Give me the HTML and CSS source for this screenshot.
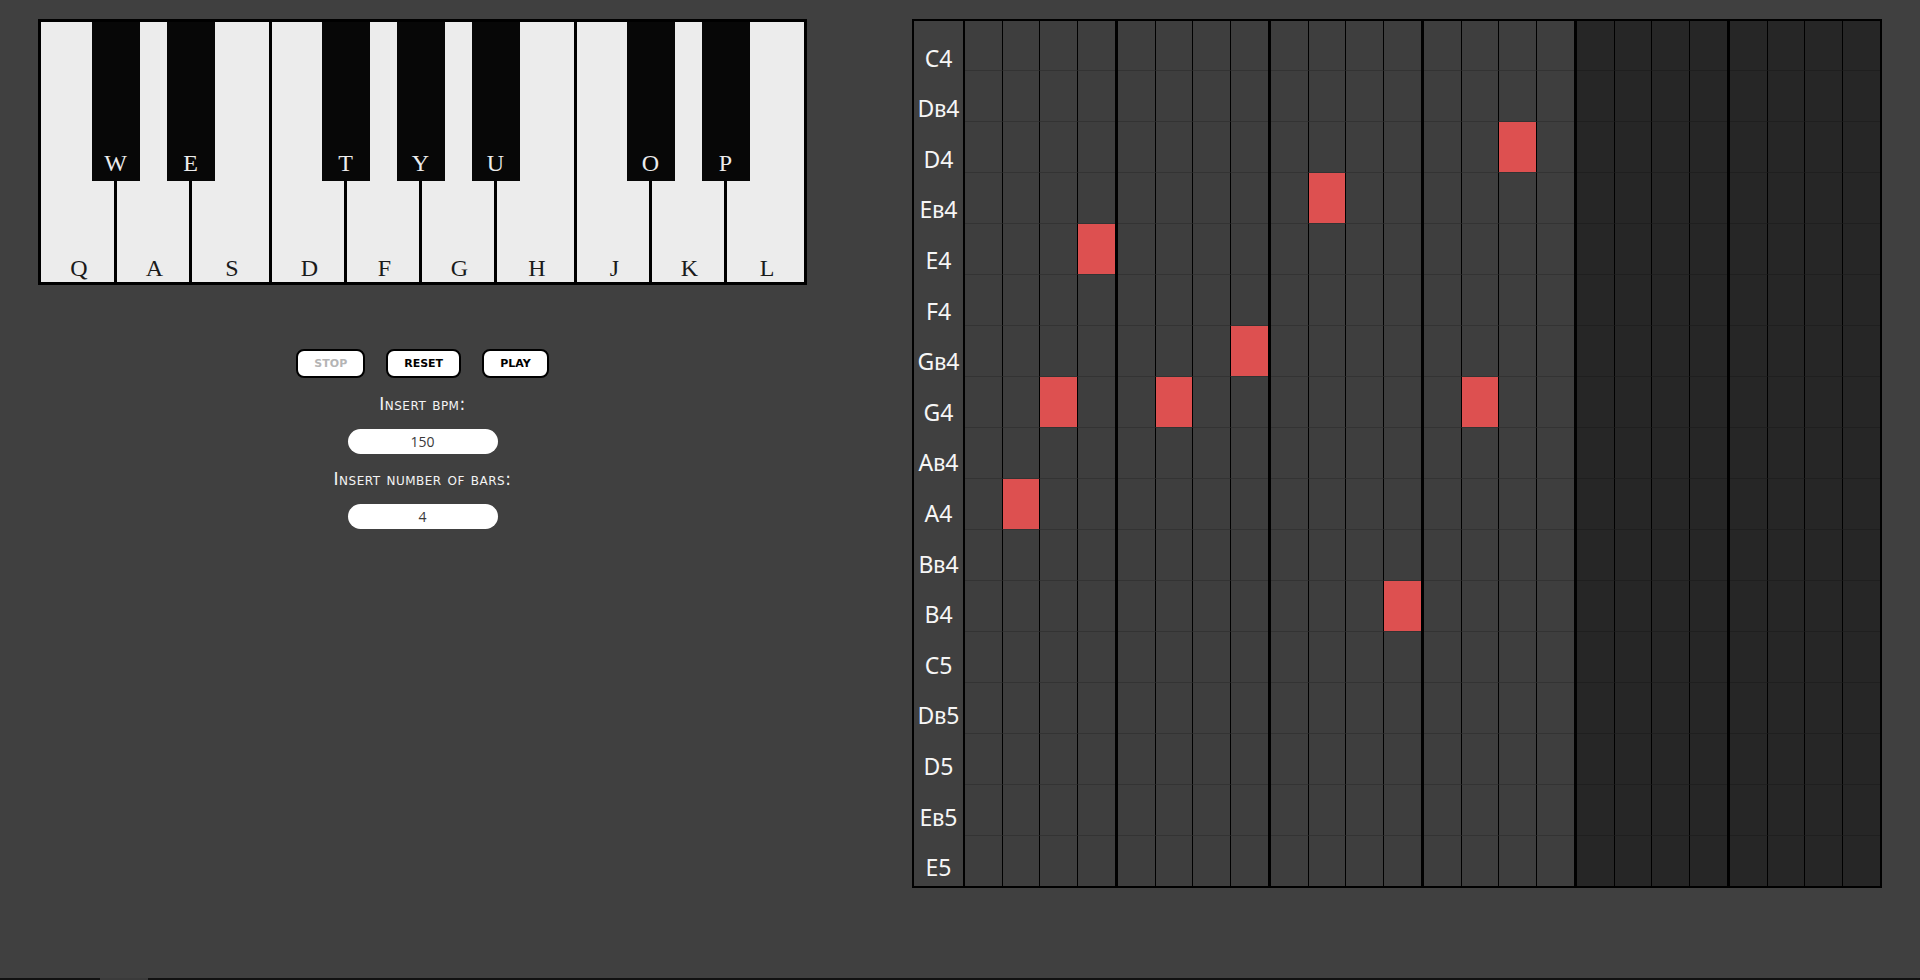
FILE: index.html
```html
<!DOCTYPE html>
<html lang="en">
<head>
<meta charset="utf-8">
<title>Piano Roll</title>
<link rel="stylesheet" href="styles.css">
</head>
<body>
<main class="app">
  <section class="left">
    <div class="piano">
      <div class="wkey k73"><span class="wlabel">Q</span><div class="bkey"><span>W</span></div></div>
      <div class="wkey k72"><span class="wlabel">A</span><div class="bkey"><span>E</span></div></div>
      <div class="wkey k77"><span class="wlabel">S</span></div>
      <div class="wkey k72"><span class="wlabel">D</span><div class="bkey"><span>T</span></div></div>
      <div class="wkey k72"><span class="wlabel">F</span><div class="bkey"><span>Y</span></div></div>
      <div class="wkey k72"><span class="wlabel">G</span><div class="bkey"><span>U</span></div></div>
      <div class="wkey k77"><span class="wlabel">H</span></div>
      <div class="wkey k72"><span class="wlabel">J</span><div class="bkey"><span>O</span></div></div>
      <div class="wkey k72"><span class="wlabel">K</span><div class="bkey"><span>P</span></div></div>
      <div class="wkey k77"><span class="wlabel">L</span></div>
    </div>
    <div class="controls">
      <div class="buttons">
        <button class="btn btn-disabled">Stop</button>
        <button class="btn">Reset</button>
        <button class="btn">Play</button>
      </div>
      <label class="field-label">Insert bpm:</label>
      <input class="field" type="text" value="150">
      <label class="field-label">Insert number of bars:</label>
      <input class="field" type="text" value="4">
    </div>
  </section>

  <section class="roll">
    <div class="labels">
      <div class="lab">C4</div>
      <div class="lab">Db4</div>
      <div class="lab">D4</div>
      <div class="lab">Eb4</div>
      <div class="lab">E4</div>
      <div class="lab">F4</div>
      <div class="lab">Gb4</div>
      <div class="lab">G4</div>
      <div class="lab">Ab4</div>
      <div class="lab">A4</div>
      <div class="lab">Bb4</div>
      <div class="lab">B4</div>
      <div class="lab">C5</div>
      <div class="lab">Db5</div>
      <div class="lab">D5</div>
      <div class="lab">Eb5</div>
      <div class="lab">E5</div>
    </div>
    <div class="bars">
      <div class="bar">
        <span></span><span></span><span></span><span></span>
        <span></span><span></span><span></span><span></span>
        <span></span><span></span><span></span><span></span>
        <span></span><span></span><span></span><span></span>
        <span></span><span></span><span></span><span class="on"></span>
        <span></span><span></span><span></span><span></span>
        <span></span><span></span><span></span><span></span>
        <span></span><span></span><span class="on"></span><span></span>
        <span></span><span></span><span></span><span></span>
        <span></span><span class="on"></span><span></span><span></span>
        <span></span><span></span><span></span><span></span>
        <span></span><span></span><span></span><span></span>
        <span></span><span></span><span></span><span></span>
        <span></span><span></span><span></span><span></span>
        <span></span><span></span><span></span><span></span>
        <span></span><span></span><span></span><span></span>
        <span></span><span></span><span></span><span></span>
      </div>
      <div class="bar">
        <span></span><span></span><span></span><span></span>
        <span></span><span></span><span></span><span></span>
        <span></span><span></span><span></span><span></span>
        <span></span><span></span><span></span><span></span>
        <span></span><span></span><span></span><span></span>
        <span></span><span></span><span></span><span></span>
        <span></span><span></span><span></span><span class="on"></span>
        <span></span><span class="on"></span><span></span><span></span>
        <span></span><span></span><span></span><span></span>
        <span></span><span></span><span></span><span></span>
        <span></span><span></span><span></span><span></span>
        <span></span><span></span><span></span><span></span>
        <span></span><span></span><span></span><span></span>
        <span></span><span></span><span></span><span></span>
        <span></span><span></span><span></span><span></span>
        <span></span><span></span><span></span><span></span>
        <span></span><span></span><span></span><span></span>
      </div>
      <div class="bar">
        <span></span><span></span><span></span><span></span>
        <span></span><span></span><span></span><span></span>
        <span></span><span></span><span></span><span></span>
        <span></span><span class="on"></span><span></span><span></span>
        <span></span><span></span><span></span><span></span>
        <span></span><span></span><span></span><span></span>
        <span></span><span></span><span></span><span></span>
        <span></span><span></span><span></span><span></span>
        <span></span><span></span><span></span><span></span>
        <span></span><span></span><span></span><span></span>
        <span></span><span></span><span></span><span></span>
        <span></span><span></span><span></span><span class="on"></span>
        <span></span><span></span><span></span><span></span>
        <span></span><span></span><span></span><span></span>
        <span></span><span></span><span></span><span></span>
        <span></span><span></span><span></span><span></span>
        <span></span><span></span><span></span><span></span>
      </div>
      <div class="bar">
        <span></span><span></span><span></span><span></span>
        <span></span><span></span><span></span><span></span>
        <span></span><span></span><span class="on"></span><span></span>
        <span></span><span></span><span></span><span></span>
        <span></span><span></span><span></span><span></span>
        <span></span><span></span><span></span><span></span>
        <span></span><span></span><span></span><span></span>
        <span></span><span class="on"></span><span></span><span></span>
        <span></span><span></span><span></span><span></span>
        <span></span><span></span><span></span><span></span>
        <span></span><span></span><span></span><span></span>
        <span></span><span></span><span></span><span></span>
        <span></span><span></span><span></span><span></span>
        <span></span><span></span><span></span><span></span>
        <span></span><span></span><span></span><span></span>
        <span></span><span></span><span></span><span></span>
        <span></span><span></span><span></span><span></span>
      </div>
      <div class="bar off">
        <span></span><span></span><span></span><span></span>
        <span></span><span></span><span></span><span></span>
        <span></span><span></span><span></span><span></span>
        <span></span><span></span><span></span><span></span>
        <span></span><span></span><span></span><span></span>
        <span></span><span></span><span></span><span></span>
        <span></span><span></span><span></span><span></span>
        <span></span><span></span><span></span><span></span>
        <span></span><span></span><span></span><span></span>
        <span></span><span></span><span></span><span></span>
        <span></span><span></span><span></span><span></span>
        <span></span><span></span><span></span><span></span>
        <span></span><span></span><span></span><span></span>
        <span></span><span></span><span></span><span></span>
        <span></span><span></span><span></span><span></span>
        <span></span><span></span><span></span><span></span>
        <span></span><span></span><span></span><span></span>
      </div>
      <div class="bar off">
        <span></span><span></span><span></span><span></span>
        <span></span><span></span><span></span><span></span>
        <span></span><span></span><span></span><span></span>
        <span></span><span></span><span></span><span></span>
        <span></span><span></span><span></span><span></span>
        <span></span><span></span><span></span><span></span>
        <span></span><span></span><span></span><span></span>
        <span></span><span></span><span></span><span></span>
        <span></span><span></span><span></span><span></span>
        <span></span><span></span><span></span><span></span>
        <span></span><span></span><span></span><span></span>
        <span></span><span></span><span></span><span></span>
        <span></span><span></span><span></span><span></span>
        <span></span><span></span><span></span><span></span>
        <span></span><span></span><span></span><span></span>
        <span></span><span></span><span></span><span></span>
        <span></span><span></span><span></span><span></span>
      </div>
    </div>
  </section>
</main>
<footer class="strip"><div class="strip-seg"></div></footer>
</body>
</html>
```

FILE: styles.css
```css
html, body {
  margin: 0;
  padding: 0;
  height: 980px;
  background: #404040;
  overflow: hidden;
}

.app {
  display: flex;
  align-items: flex-start;
  gap: 105px;
  padding: 19px 38px 0 38px;
  height: 978px;
  box-sizing: border-box;
}

/* ---------- Piano ---------- */
.left {
  width: 769px;
  display: flex;
  flex-direction: column;
  align-items: center;
}

.piano {
  display: flex;
  border: 3px solid #000;
  background: #000;
  height: 260px;
}

.wkey {
  position: relative;
  background: #ececec;
  border-right: 3px solid #000;
  display: flex;
  flex-direction: column;
  justify-content: flex-end;
  align-items: center;
  font-family: "Liberation Serif", "Times New Roman", serif;
  font-size: 24px;
  line-height: 24px;
  color: #1a1a1a;
}
.wkey:last-child { border-right: none; }
.k72 { width: 72px; }
.k73 { width: 73px; }
.k77 { width: 77px; }

.wlabel {
  padding-bottom: 2px;
  padding-left: 3px;
}

.bkey {
  position: absolute;
  top: 0;
  right: -25.5px;
  width: 48px;
  height: 159px;
  background: #070707;
  z-index: 2;
  display: flex;
  flex-direction: column;
  justify-content: flex-end;
  align-items: center;
  color: #ececec;
}
.bkey span { padding-bottom: 6px; }

/* ---------- Controls ---------- */
.controls {
  margin-top: 64px;
  display: flex;
  flex-direction: column;
  align-items: center;
  gap: 15px;
}

.buttons {
  display: flex;
  gap: 21px;
  margin-bottom: 1px;
}

.btn {
  height: 29px;
  box-sizing: border-box;
  padding: 0 16px;
  border: 2px solid #000;
  border-radius: 8px;
  background: #fff;
  font-family: "DejaVu Sans", Verdana, sans-serif;
  font-weight: bold;
  font-size: 11px;
  text-transform: uppercase;
  color: #000;
}
.btn-disabled { color: #b4b4b4; }

.field-label {
  font-family: "DejaVu Sans", "Open Sans", sans-serif;
  font-variant: small-caps;
  font-size: 17px;
  letter-spacing: 0.5px;
  line-height: 20px;
  color: #f4f4f4;
}

.field {
  width: 150px;
  height: 25px;
  box-sizing: border-box;
  border: none;
  border-radius: 13px;
  padding: 0;
  background: #fff;
  text-align: center;
  font-family: "Open Sans", "Noto Sans", sans-serif;
  font-size: 14px;
  font-weight: 400;
  color: #3a3a3a;
}

/* ---------- Piano roll ---------- */
.roll {
  display: flex;
  width: 970px;
  box-sizing: border-box;
  border: 2px solid #000;
}

.labels {
  width: 49px;
  border-right: 2px solid #000;
  display: flex;
  flex-direction: column;
}

.lab {
  flex: 0 0 50.6px;
  height: 50.6px;
  box-sizing: border-box;
  display: flex;
  align-items: flex-end;
  justify-content: center;
  padding-bottom: 2px;
  font-family: "Noto Sans", "Open Sans", sans-serif;
  font-size: 23px;
  line-height: 23px;
  font-variant: small-caps;
  color: #f6f6f6;
}

.bars {
  flex: 1;
  display: flex;
}

.bar {
  flex: 1;
  min-width: 0;
  display: grid;
  grid-template-columns: repeat(4, 1fr);
  border-right: 3px solid #000;
}
.bar:last-child { border-right: none; }

.bar span {
  display: block;
  height: 50px;
  background: #3e3e3e;
  border-bottom: 1px solid #333333;
  border-right: 1px solid #000;
}
.bar span:nth-child(-n+4) { height: 49px; }
.bar span:nth-child(4n) { border-right: none; }
.bar span:nth-last-child(-n+4) { border-bottom: none; }

.bar span.on { background: #dd5050; }

.bar.off span {
  background: #262626;
  border-bottom-color: #1f1f1f;
}
.bar.off span:nth-last-child(-n+4) { border-bottom: none; }

/* ---------- bottom strip ---------- */
.strip {
  height: 2px;
  background: #111;
  display: flex;
  padding-left: 100px;
}
.strip-seg {
  width: 48px;
  height: 2px;
  background: #3a3a3a;
}
```
